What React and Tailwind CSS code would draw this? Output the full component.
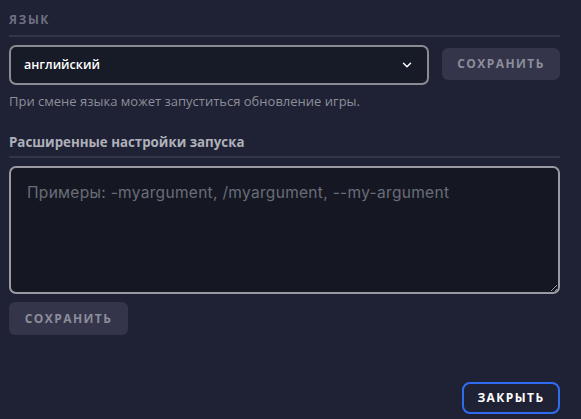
import React from 'react';

const App = () => {
    return (
        <div className="w-[581px] h-[419px] bg-[#1f2134] overflow-hidden flex" style={{ fontFamily: '"Open Sans", "Noto Sans", sans-serif' }}>
            <div className="flex-1 pl-[9px] pr-[21px] flex flex-col">
                <div className="pt-[12px] text-[12px] font-bold tracking-[0.13em] text-[#6e7081] leading-[15px]">ЯЗЫК</div>
                <div className="mt-[8px] h-[2px] bg-[#333648]"></div>
                <div className="mt-[8px] flex items-start gap-[13px]">
                    <div className="w-[420px] h-[40px] rounded-[7px] border-2 border-[#8b8b93] bg-[#171a27] flex items-center justify-between pl-[13px] pr-[13px]">
                        <span className="text-[12.5px] font-semibold text-white">английский</span>
                        <svg width="14" height="14" viewBox="0 0 24 24" fill="none" stroke="#ffffff" strokeWidth="2.5" strokeLinecap="round" strokeLinejoin="round">
                            <path d="M6 9l6 6 6-6" />
                        </svg>
                    </div>
                    <button className="mt-[3px] w-[118px] h-[32px] rounded-[6px] bg-[#34354a] text-[12px] font-bold tracking-[0.12em] text-[#8c8e9b]">СОХРАНИТЬ</button>
                </div>
                <div className="mt-[7px] text-[13px] text-[#8d8f9b] leading-[18px]">При смене языка может запуститься обновление игры.</div>
                <div className="mt-[23px] text-[13.3px] font-bold text-[#aeb0ba] leading-[18px]">Расширенные настройки запуска</div>
                <div className="mt-[5px] h-[2px] bg-[#333648]"></div>
                <textarea
                    className="mt-[8px] h-[128px] rounded-[7px] border-2 border-[#9a9aa2] bg-[#151823] px-[16px] py-[13px] text-[15.5px] tracking-[0.02em] leading-[24px] text-white placeholder:text-[#6a6d78] outline-none"
                    style={{ fontFamily: 'Inter, "Noto Sans", sans-serif' }}
                    placeholder="Примеры: -myargument, /myargument, --my-argument"
                ></textarea>
                <div className="mt-[8px]">
                    <button className="w-[119px] h-[33px] rounded-[6px] bg-[#34354a] text-[12px] font-bold tracking-[0.12em] text-[#8c8e9b]">СОХРАНИТЬ</button>
                </div>
                <div className="mt-auto mb-[5px] flex justify-end">
                    <button className="w-[98px] h-[32px] rounded-[8px] border-2 border-[#2f6cf2] text-[12px] font-bold tracking-[0.12em] text-white">ЗАКРЫТЬ</button>
                </div>
            </div>
        </div>
    );
};

export default App;
